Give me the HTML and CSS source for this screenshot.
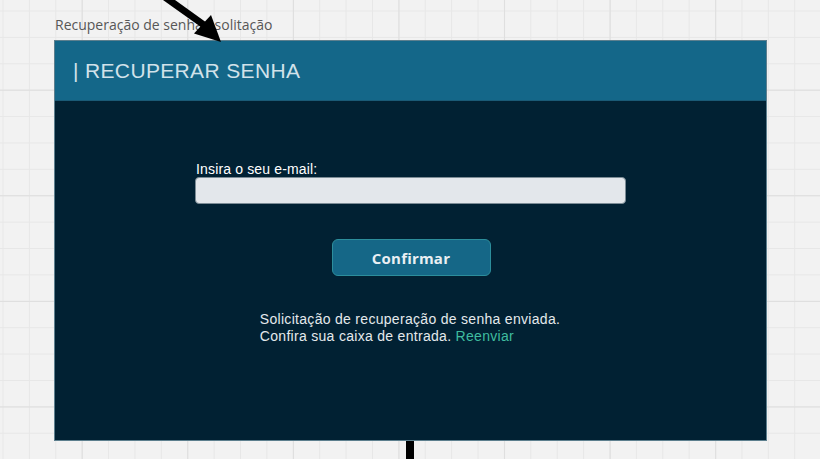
FILE: index.html
```html
<!DOCTYPE html>
<html lang="pt-BR">
<head>
<meta charset="utf-8">
<title>Recuperação de senha - solitação</title>
<link rel="stylesheet" href="styles.css">
</head>
<body>
<div class="canvas">
  <div class="frame">
    <div class="caption">Recuperação de senha - solitação</div>
    <div class="card">
      <div class="card-header">
        <h1 class="card-title">| RECUPERAR SENHA</h1>
      </div>
      <div class="card-body">
        <div class="form">
          <label class="label" for="email">Insira o seu e-mail:</label>
          <input class="input" id="email" type="text">
        </div>
        <button class="btn" type="button">Confirmar</button>
        <p class="message">Solicitação de recuperação de senha enviada.<br>Confira sua caixa de entrada. <a class="link" href="#">Reenviar</a></p>
      </div>
    </div>
  </div>
  <svg class="arrow-in" width="240" height="50" viewBox="0 0 240 50" aria-hidden="true">
    <line x1="155" y1="-10" x2="204" y2="25" stroke="#000" stroke-width="7"/>
    <polygon points="221,42 194,33.5 211,15" fill="#000"/>
  </svg>
  <div class="connector-out"></div>
</div>
</body>
</html>
```

FILE: styles.css
```css
html, body {
  margin: 0;
  padding: 0;
}

body {
  width: 820px;
  height: 459px;
  overflow: hidden;
  font-family: "Liberation Sans", Arial, sans-serif;
}

.canvas {
  position: relative;
  width: 820px;
  height: 459px;
  box-sizing: border-box;
  padding: 16px 0 0 54px;
  background-color: #f2f2f2;
  background-image:
    linear-gradient(to right, #dedede 1px, transparent 1px),
    linear-gradient(to bottom, #dedede 1px, transparent 1px),
    linear-gradient(to right, #e7e7e7 1px, transparent 1px),
    linear-gradient(to bottom, #e7e7e7 1px, transparent 1px);
  background-size:
    105.6px 105.6px,
    105.6px 105.6px,
    26.4px 26.4px,
    26.4px 26.4px;
  background-position:
    81.7px 89.7px,
    81.7px 89.7px,
    2.5px 10.5px,
    2.5px 10.5px;
}

.frame {
  display: flex;
  flex-direction: column;
  width: 713px;
}

.caption {
  font-family: "Open Sans", sans-serif;
  font-size: 14px;
  line-height: 18px;
  color: #575757;
  padding-left: 1px;
  margin-bottom: 6px;
}

.card {
  height: 401px;
  box-sizing: border-box;
  border: 1px solid #5d7f8e;
  background: #012133;
  display: flex;
  flex-direction: column;
}

.card-header {
  height: 59px;
  flex: none;
  background: #146789;
  border-bottom: 1px solid #1a5a76;
  display: flex;
  align-items: center;
  padding-left: 18px;
}

.card-title {
  margin: 0;
  font-family: "Liberation Sans", Arial, sans-serif;
  font-weight: 400;
  font-size: 21px;
  line-height: 24px;
  letter-spacing: 0.35px;
  color: #d2e2ea;
  padding-top: 1px;
}

.card-body {
  display: flex;
  flex-direction: column;
  align-items: center;
  padding-top: 60px;
  padding-right: 1px;
}

.form {
  width: 431px;
  display: flex;
  flex-direction: column;
  margin-left: 1px;
}

.label {
  font-size: 14px;
  line-height: 16px;
  letter-spacing: 0.15px;
  color: #ffffff;
  padding-left: 1px;
}

.input {
  height: 27px;
  box-sizing: border-box;
  margin: 0;
  padding: 0 8px;
  border: 1px solid #7c8c96;
  border-radius: 4px;
  background: #e3e7eb;
  font-size: 14px;
  outline: none;
}

.btn {
  margin-top: 35px;
  margin-left: 2px;
  width: 159px;
  height: 37px;
  box-sizing: border-box;
  border: 1px solid #2c8e9c;
  border-radius: 6px;
  background: #156787;
  color: #e9eff3;
  font-family: "Open Sans", sans-serif;
  font-weight: 700;
  font-size: 15px;
  line-height: 20px;
  letter-spacing: 0.2px;
  padding: 0;
  cursor: pointer;
}

.message {
  margin: 35px 0 0 0;
  font-size: 14px;
  line-height: 17px;
  letter-spacing: 0.3px;
  color: #e4e9ec;
}

.link {
  color: #3fbc9f;
  text-decoration: none;
}

.arrow-in {
  position: absolute;
  left: 0;
  top: 0;
  overflow: visible;
}

.connector-out {
  position: absolute;
  left: 406px;
  top: 441px;
  width: 8px;
  height: 18px;
  background: #000;
}
```
